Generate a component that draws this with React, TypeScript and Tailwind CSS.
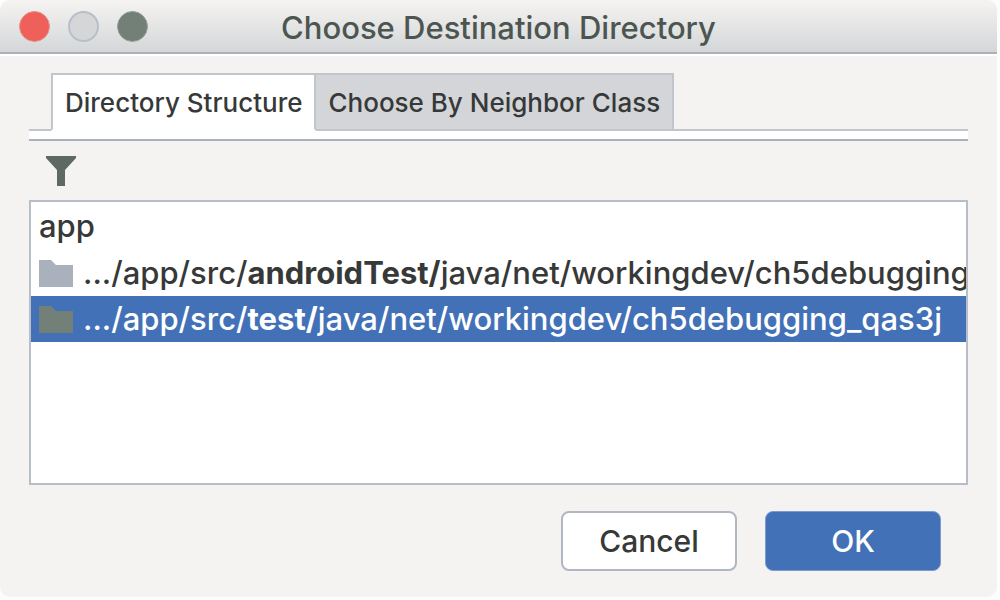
import { useState } from "react";

type Row = { before: string; strong: string; after: string };

const rows: Row[] = [
  { before: ".../app/src/", strong: "androidTest/", after: "java/net/workingdev/ch5debugging" },
  { before: ".../app/src/", strong: "test/", after: "java/net/workingdev/ch5debugging_qas3j" },
];

const tabs = ["Directory Structure", "Choose By Neighbor Class"];

function FolderIcon({ selected }: { selected: boolean }) {
  return (
    <svg
      aria-hidden="true"
      viewBox="0 0 34 28"
      className={`h-7 w-[34px] shrink-0 ${selected ? "text-[#728078]" : "text-[#a9b1bd]"}`}
    >
      <path d="M0 1H12L17 6H34V28H0Z" fill="currentColor" />
    </svg>
  );
}

function TitleBar() {
  return (
    <header className="grid h-[54px] grid-cols-[1fr_auto_1fr] items-center border-b-2 border-[#a9b1bd] bg-linear-to-b from-[#f5f4f2] to-[#d4d6d8]">
      <div className="flex gap-[18px] pl-[19px]">
        <button aria-label="Close" className="size-[31px] rounded-full border border-[#e5938e] bg-[#ee6059]" />
        <button aria-label="Minimize" className="size-[31px] rounded-full border-2 border-[#b9bfc8] bg-[#d4d6d8]" />
        <button aria-label="Zoom" className="size-[31px] rounded-full border border-[#98a19c] bg-[#728078]" />
      </div>
      <h1 className="pt-1 text-[31px] leading-9 font-medium text-[#4d5551]">Choose Destination Directory</h1>
    </header>
  );
}

export default function App() {
  const [tab, setTab] = useState(0);
  const [selected, setSelected] = useState(1);

  return (
    <div className="min-h-screen bg-[#fdfdfd] pr-[3px] pb-[3px] font-['Inter','Liberation_Sans',sans-serif] text-[#363938]">
      <div className="flex min-h-[calc(100vh-3px)] flex-col overflow-hidden rounded-[10px] bg-[#f4f3f1]">
        <TitleBar />
        <main className="flex flex-1 flex-col border-t-2 border-white px-[29px] pt-[17px] pb-[26px]">
          <div role="tablist" className="flex">
            <span className="w-[22px] border-b-2 border-[#c1c6ce]" />
            {tabs.map((name, i) => (
              <button
                key={name}
                role="tab"
                aria-selected={tab === i}
                onClick={() => setTab(i)}
                className={`h-[58px] border-2 border-[#c1c6ce] px-3 pt-[2px] text-[26px] leading-8 font-medium whitespace-nowrap not-first-of-type:border-l-0 ${
                  tab === i ? "border-b-white bg-white" : "bg-[#d3d5d8]"
                }`}
              >
                {name}
              </button>
            ))}
            <span className="flex-1 border-b-2 border-[#c1c6ce]" />
          </div>
          <div className="h-[10px] shrink-0 border-b-2 border-[#a9b1bd] bg-white" />
          <div className="flex h-[59px] shrink-0 items-center pl-[17px]">
            <button aria-label="Filter">
              <svg aria-hidden="true" viewBox="0 0 30 30" className="size-[30px] text-[#5d6962]">
                <path d="M0 0H30V2L19 14V30H11V14L0 2Z" fill="currentColor" />
              </svg>
            </button>
          </div>
          <div className="flex-1 overflow-hidden border-2 border-[#b8bec7] bg-white pt-[2px] text-[31px] leading-[44px] font-medium whitespace-nowrap">
            <p className="h-[46px] px-2">app</p>
            <div role="listbox" aria-label="Destination directories">
              {rows.map((row, i) => (
                <button
                  key={row.strong}
                  role="option"
                  aria-selected={selected === i}
                  onClick={() => setSelected(i)}
                  className={`flex h-[46px] w-full items-center gap-[10px] px-2 ${
                    selected === i ? "bg-[#4371b7] text-white" : ""
                  }`}
                >
                  <FolderIcon selected={selected === i} />
                  <span>
                    {row.before}
                    <b className="font-bold">{row.strong}</b>
                    {row.after}
                  </span>
                </button>
              ))}
            </div>
          </div>
          <footer className="flex justify-end gap-[28px] pt-[26px] pr-[27px] text-[30px] leading-9 font-medium">
            <button className="h-[60px] w-[176px] rounded-lg border-2 border-[#b0b7c2] bg-white">Cancel</button>
            <button className="h-[60px] w-[176px] rounded-lg border border-[#7d9ccb] bg-[#4371b7] text-white">OK</button>
          </footer>
        </main>
      </div>
    </div>
  );
}
